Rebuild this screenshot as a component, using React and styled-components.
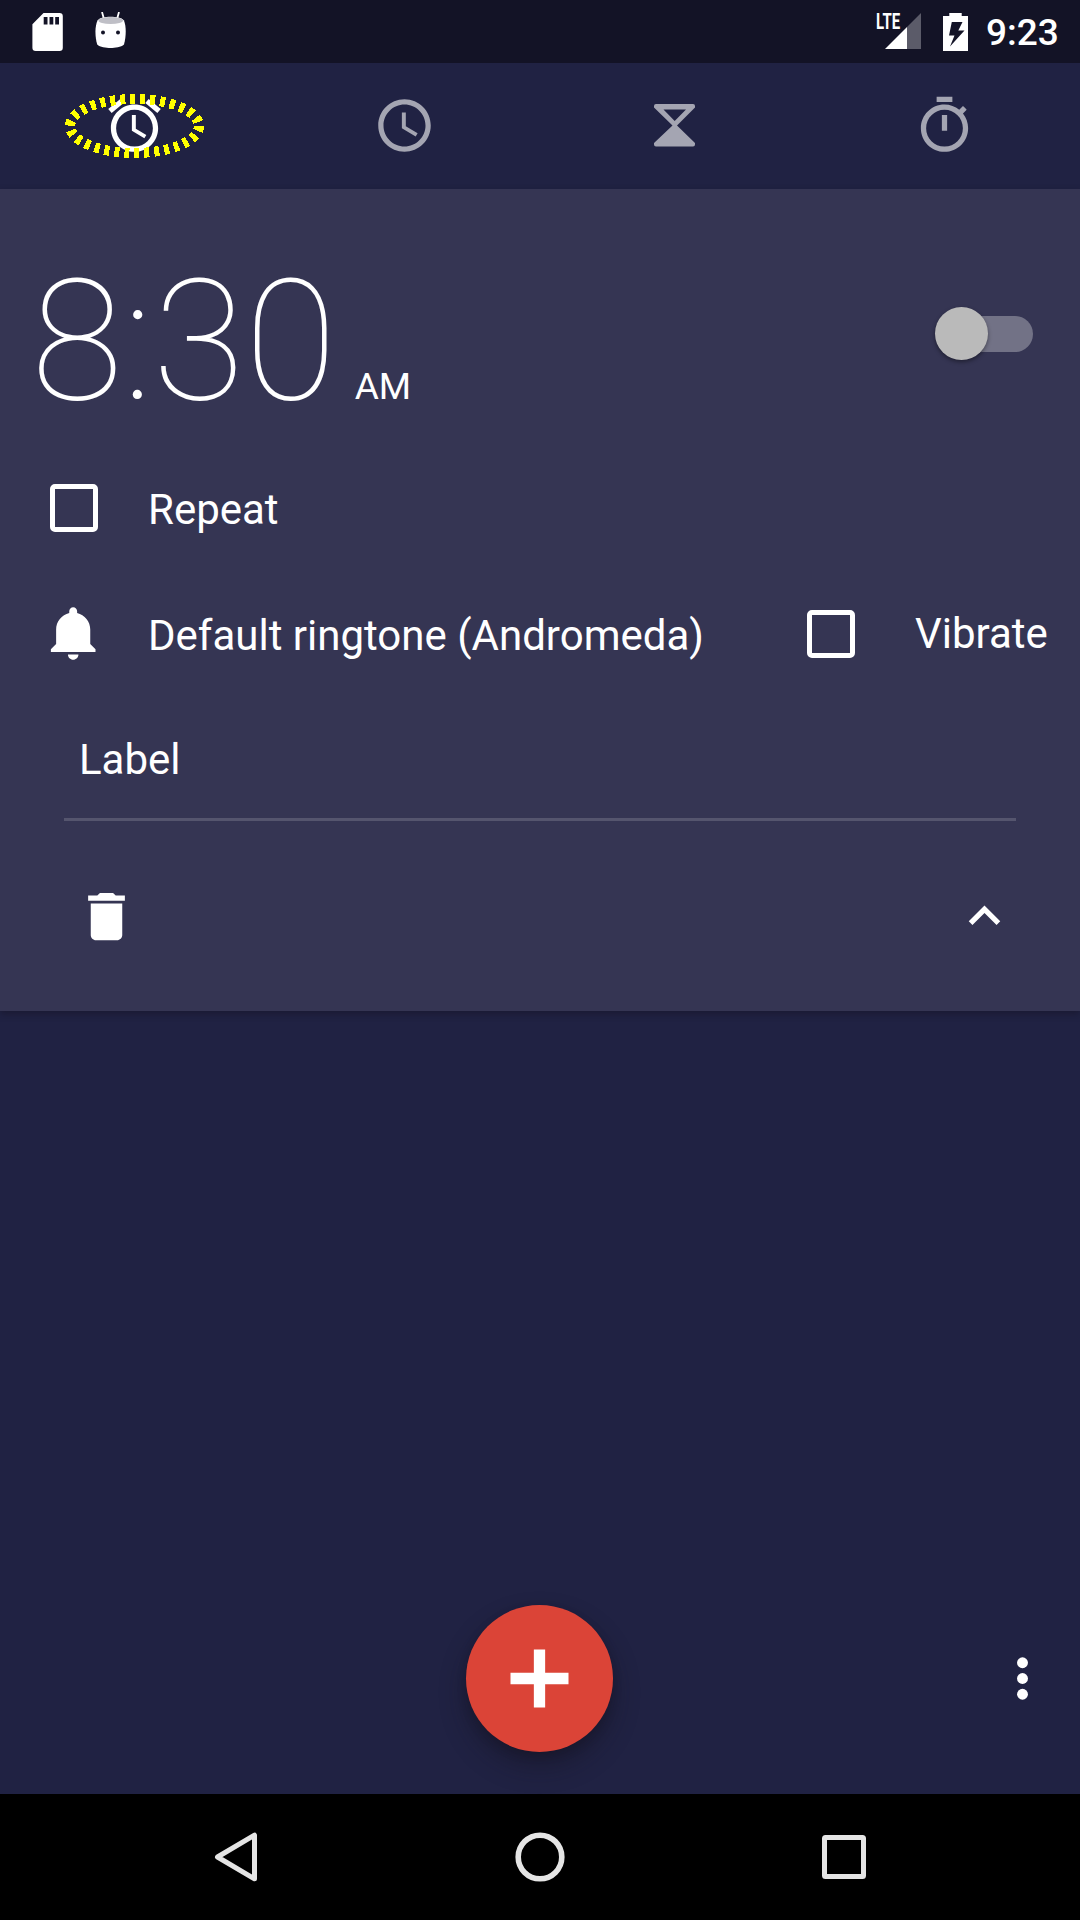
import React from "react";
import styled, { createGlobalStyle } from "styled-components";

const GlobalStyle = createGlobalStyle`
  * { box-sizing: border-box; }
  html, body { margin: 0; padding: 0; background: #202243; }
  body { font-family: Roboto, "Noto Sans", sans-serif; color: #fff; }
  button { border: 0; padding: 0; background: none; color: inherit; font: inherit; }
`;

const Screen = styled.div`
  display: flex;
  flex-direction: column;
  width: 1080px;
  height: 1920px;
  overflow: hidden;
  background: #202243;
`;

const StatusBar = styled.header`
  display: flex;
  justify-content: space-between;
  flex: none;
  height: 63px;
  padding: 0 22px 0 32px;
  background: #131326;
`;

const StatusGroup = styled.div`
  display: flex;
  align-items: center;
`;

const Glyph = styled.svg`
  display: block;
  flex: none;
  width: ${(p) => p.$w || 63}px;
  height: ${(p) => p.$h || p.$w || 63}px;
  margin-left: ${(p) => p.$gap || 0}px;
`;

const Network = styled.div`
  display: flex;
  align-items: flex-start;
  height: 63px;
  padding-top: 13px;
`;

const NetworkType = styled.span`
  width: 9px;
  font-size: 22px;
  font-weight: 700;
  line-height: 18px;
  white-space: nowrap;
  transform: scaleX(0.68);
  transform-origin: 0 0;
`;

const Clock = styled.time`
  margin-left: 18px;
  width: 72px;
  font-size: 37px;
  font-weight: 500;
  line-height: 66px;
  padding-top: 2px;
  white-space: nowrap;
`;

const Tabs = styled.nav`
  display: grid;
  grid-template-columns: repeat(4, 1fr);
  flex: none;
  height: 126px;
`;

const Tab = styled.button`
  position: relative;
  display: flex;
  align-items: center;
  justify-content: center;
  padding: 0 1.5px 1.5px 0;
  color: ${(p) => (p.$active ? "#fff" : "#a4a5b2")};
`;

const FocusRing = styled.svg`
  position: absolute;
  left: 60px;
  top: 26px;
  width: 150px;
  height: 74px;
`;

const Card = styled.section`
  display: flex;
  flex-direction: column;
  flex: none;
  height: 822px;
  background: #353553;
  box-shadow: 0 3px 7px rgba(20, 16, 32, 0.45);
`;

const TimeRow = styled.div`
  display: flex;
  justify-content: space-between;
  height: 256px;
  padding: 53px 47px 0 31px;
`;

const Time = styled.div`
  display: flex;
  align-items: baseline;
  height: 200px;
  line-height: 200px;
  white-space: nowrap;
`;

const Digits = styled.span`
  font-size: 168px;
  font-weight: 100;
`;

const Meridiem = styled.span`
  margin-left: 18px;
  font-size: 37px;
`;

const Switch = styled.button`
  display: flex;
  align-items: center;
  justify-content: flex-end;
  width: 98px;
  height: 54px;
  margin-top: 65px;
`;

const Track = styled.span`
  display: flex;
  align-items: center;
  width: 89px;
  height: 36px;
  border-radius: 18px;
  background: #727286;
`;

const Thumb = styled.span`
  flex: none;
  width: 53px;
  height: 53px;
  margin: -1px 0 0 -9px;
  border-radius: 50%;
  background: #bababa;
  box-shadow: 0 2px 4px rgba(0, 0, 0, 0.4);
`;

const Row = styled.div`
  display: flex;
  align-items: center;
  height: 126px;
  padding: 0 0 0 43px;
`;

const IconCell = styled.span`
  display: flex;
  justify-content: center;
  width: 63px;
  flex: none;
  padding: 0 ${(p) => p.$right || 0}px ${(p) => p.$bottom || 0}px 0;
`;

const Checkbox = styled.span`
  width: 48px;
  height: 48px;
  border: 5.4px solid #fff;
  border-radius: 5px;
`;

const Text = styled.span`
  margin-left: ${(p) => p.$gap}px;
  padding-top: ${(p) => p.$drop || 0}px;
  width: ${(p) => (p.$w ? p.$w + "px" : "auto")};
  font-size: 42px;
  line-height: 50px;
  white-space: nowrap;
`;

const LabelField = styled.div`
  display: flex;
  align-items: center;
  height: 124px;
  margin: 0 64px;
  padding: 5px 0 0 15px;
  border-bottom: 3px solid #55556e;
`;

const CardFooter = styled.footer`
  display: flex;
  justify-content: space-between;
  padding: 63.5px 64px 0 75px;
`;

const Actions = styled.div`
  display: grid;
  grid-template-columns: 1fr 147px 1fr;
  align-items: center;
  flex: none;
  height: 147px;
  margin-top: 594px;
  padding-right: 1px;
`;

const Fab = styled.button`
  grid-column: 2;
  display: flex;
  align-items: center;
  justify-content: center;
  width: 147px;
  height: 147px;
  border-radius: 50%;
  background: #db4437;
  box-shadow: 0 14px 26px rgba(20, 16, 26, 0.42), 0 4px 8px rgba(20, 16, 26, 0.25);
`;

const Overflow = styled.button`
  display: flex;
  justify-self: end;
  margin-right: 25px;
`;

const NavBar = styled.nav`
  display: flex;
  align-items: center;
  justify-content: center;
  gap: 185px;
  height: 126px;
  margin-top: auto;
  background: #000;
`;

export default function App() {
  return (
    <>
      <GlobalStyle />
      <Screen>
        <StatusBar>
          <StatusGroup>
            <Glyph $w={31} $h={38} viewBox="0 0 31 38">
              <path
                fill="#fff"
                fillRule="evenodd"
                d="M11.5 0H27.5a3.3 3.3 0 0 1 3.3 3.3V34.700a3.300 3.300 0 0 1-3.300 3.300H3.700A3.300 3.300 0 0 1 .4 34.700V11.300zM11.700 4v7.600h3.800V4zM17.500 4v7.600h3.800V4zM23.200 4v7.600H27V4z"
              />
            </Glyph>
            <Glyph $w={32} $h={40} $gap={32} viewBox="0 0 32 40">
              <path d="M7 0l2.500 9M24 0l-2.500 9" stroke="#fff" strokeWidth="1.800" />
              <path
                fill="#fff"
                d="M2.500 8.500C5 5.500 10 4.800 15.500 4.800S26.500 5.500 29 8.500C31.300 14.500 31.300 24 29 32.500C26 35.200 20 36 15.500 36S5 35.200 2.200 32.500C-.2 24-.2 14.500 2.500 8.500z"
              />
              <ellipse cx="15.700" cy="8.500" rx="12.300" ry="3.600" fill="#bfbfc6" />
              <circle cx="8" cy="20.500" r="2" fill="#131326" />
              <circle cx="23" cy="20.500" r="2" fill="#131326" />
            </Glyph>
          </StatusGroup>
          <StatusGroup>
            <Network>
              <NetworkType>LTE</NetworkType>
              <Glyph $w={36} $h={36} viewBox="0 0 36 36">
                <path d="M36 0V36H22V14z" fill="#5b5b69" />
                <path d="M22 14V36H0z" fill="#fff" />
              </Glyph>
            </Network>
            <Glyph $w={25} $h={38} $gap={22} viewBox="0 0 25 38">
              <path
                fill="#fff"
                fillRule="evenodd"
                d="M6.300 0H18.700V3H25V38H0V3H6.300zM8.800 9L6 22.500H11.500L7 33.500L21.500 17.500H15.300L19.500 9z"
              />
            </Glyph>
            <Clock>9:23</Clock>
          </StatusGroup>
        </StatusBar>

        <Tabs>
          <Tab $active>
            <Glyph viewBox="0 0 24 24" fill="currentColor">
              <path d="M22 5.720l-4.600-3.860-1.290 1.530 4.600 3.860L22 5.720zM7.880 3.390L6.600 1.860 2 5.710l1.290 1.530 4.590-3.850zM12.500 8H11v6l4.750 2.850.75-1.230-4-2.370V8zM12 4c-4.970 0-9 4.030-9 9s4.020 9 9 9c4.970 0 9-4.030 9-9s-4.030-9-9-9zm0 16c-3.870 0-7-3.130-7-7s3.130-7 7-7 7 3.130 7 7-3.130 7-7 7z" />
            </Glyph>
            <FocusRing viewBox="0 0 150 74" shapeRendering="crispEdges">
              <ellipse
                cx="74.500"
                cy="37"
                rx="64.500"
                ry="27"
                fill="none"
                stroke="#ff0"
                strokeWidth="10"
                strokeDasharray="5 5"
              />
            </FocusRing>
          </Tab>
          <Tab>
            <Glyph viewBox="0 0 24 24" fill="currentColor">
              <path d="M11.990 2C6.470 2 2 6.480 2 12s4.470 10 9.990 10C17.520 22 22 17.520 22 12S17.520 2 11.990 2zM12 20c-4.420 0-8-3.580-8-8s3.580-8 8-8 8 3.580 8 8-3.580 8-8 8zM12.500 7H11v6l5.250 3.150.75-1.230-4.500-2.670z" />
            </Glyph>
          </Tab>
          <Tab>
            <Glyph viewBox="0 0 63 63" fill="currentColor">
              <path
                fillRule="evenodd"
                d="M13 10H50a2 2 0 0 1 2 2v1.500L34 31.500L52 49v1.500a2 2 0 0 1-2 2H13a2 2 0 0 1-2-2V49L29.500 31.500L11 13.500V12a2 2 0 0 1 2-2zM20.500 15.500L31.700 27L43 15.500z"
              />
            </Glyph>
          </Tab>
          <Tab>
            <Glyph viewBox="0 0 24 24" fill="currentColor">
              <path d="M15 1H9v2h6V1zm-4 13h2V8h-2v6zm8.030-6.610l1.420-1.420c-.43-.51-.9-.99-1.410-1.410l-1.420 1.420C16.070 4.740 14.120 4 12 4c-4.970 0-9 4.030-9 9s4.020 9 9 9 9-4.030 9-9c0-2.120-.74-4.070-1.970-5.610zM12 20c-3.870 0-7-3.130-7-7s3.130-7 7-7 7 3.130 7 7-3.130 7-7 7z" />
            </Glyph>
          </Tab>
        </Tabs>

        <Card>
          <TimeRow>
            <Time>
              <Digits>8:30</Digits>
              <Meridiem>AM</Meridiem>
            </Time>
            <Switch aria-label="Alarm">
              <Track>
                <Thumb />
              </Track>
            </Switch>
          </TimeRow>
          <Row>
            <IconCell $right={1.5}>
              <Checkbox />
            </IconCell>
            <Text $gap={42} $drop={3}>Repeat</Text>
          </Row>
          <Row>
            <IconCell $bottom={2}>
              <Glyph viewBox="0 0 24 24" fill="#fff">
                <path d="M11.500 22c1.100 0 2-.9 2-2h-4c0 1.100.9 2 2 2zm6.500-6v-5.500c0-3.070-2.130-5.640-5-6.320V3.500c0-.83-.67-1.500-1.500-1.500S10 2.670 10 3.500v.68c-2.870.68-5 3.250-5 6.320V16l-2 2v1h17v-1l-2-2z" />
              </Glyph>
            </IconCell>
            <Text $gap={42} $drop={3} $w={651}>Default ringtone (Andromeda)</Text>
            <IconCell>
              <Checkbox />
            </IconCell>
            <Text $gap={53}>Vibrate</Text>
          </Row>
          <LabelField>
            <Text $gap={0}>Label</Text>
          </LabelField>
          <CardFooter>
            <Glyph viewBox="0 0 24 24" fill="#fff">
              <path d="M6 19c0 1.100.9 2 2 2h8c1.100 0 2-.9 2-2V7H6v12zM19 4h-3.500l-1-1h-5l-1 1H5v2h14V4z" />
            </Glyph>
            <Glyph viewBox="0 0 24 24" fill="#fff">
              <path d="M12 7.800l-6 6 1.410 1.410L12 10.630l4.590 4.580L18 13.800z" />
            </Glyph>
          </CardFooter>
        </Card>

        <Actions>
          <Fab aria-label="Add alarm">
            <Glyph $w={59} viewBox="0 0 59 59">
              <path d="M29.500 .5V58.500M.5 29.500H58.500" stroke="#fff" strokeWidth="11.300" />
            </Glyph>
          </Fab>
          <Overflow aria-label="More options">
            <Glyph viewBox="0 0 24 24" fill="#fff">
              <circle cx="12" cy="6" r="2.080" />
              <circle cx="12" cy="12" r="2.080" />
              <circle cx="12" cy="18" r="2.080" />
            </Glyph>
          </Overflow>
        </Actions>

        <NavBar>
          <Glyph $w={120} $h={60} viewBox="0 0 120 60">
            <path
              d="M79.500 8.200V51.800L42.500 30z"
              fill="none"
              stroke="#e5e5e5"
              strokeWidth="5"
              strokeLinejoin="round"
            />
          </Glyph>
          <Glyph $w={120} $h={60} viewBox="0 0 120 60">
            <circle cx="60" cy="30" r="21.800" fill="none" stroke="#e5e5e5" strokeWidth="5.600" />
          </Glyph>
          <Glyph $w={120} $h={60} viewBox="0 0 120 60">
            <rect x="39.500" y="10.500" width="39" height="39" rx="1" fill="none" stroke="#e5e5e5" strokeWidth="5" />
          </Glyph>
        </NavBar>
      </Screen>
    </>
  );
}
